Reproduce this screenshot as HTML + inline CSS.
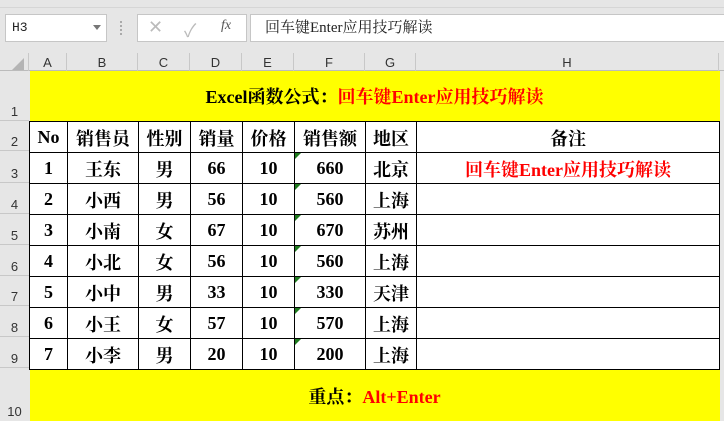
<!DOCTYPE html>
<html><head><meta charset="utf-8"><style>
*{margin:0;padding:0;box-sizing:border-box}
body{width:724px;height:420px;overflow:hidden;background:#e6e6e6;position:relative;font-family:"Liberation Sans","Noto Sans CJK SC",sans-serif}
.abs{position:absolute}
.colh{position:absolute;top:53px;height:18px;font-size:13px;color:#333;text-align:center;line-height:20px;border-right:1px solid #c8c8c8}
.rowh{position:absolute;left:0;width:29px;font-size:13px;color:#333;text-align:center;border-bottom:1px solid #c8c8c8;display:flex;align-items:flex-end;justify-content:center;line-height:16px}
table{position:absolute;left:29px;top:71px;border-collapse:collapse;table-layout:fixed;font-family:"Liberation Serif","Noto Serif CJK SC",serif;font-weight:bold;font-size:18px;color:#000}
td{text-align:center;padding:2px 0 0 0;overflow:hidden;white-space:nowrap;position:relative;background:#fff}
tr.d td{border:1.5px solid #000;height:31px}
td.y{background:#ff0;border:none}
.r{color:#f00}
.tri{position:absolute;left:0;top:0;width:0;height:0;border-top:6px solid #1e7a1e;border-right:6px solid transparent}
</style></head><body>
<div class="abs" style="left:0;top:0;width:724px;height:8px;background:#e6e6e6;border-bottom:1px solid #d6d6d6"></div>
<div class="abs" style="left:5px;top:14px;width:102px;height:28px;background:#fff;border:1px solid #c6c6c6;font-size:13px;line-height:26px;padding-left:6px;color:#222;font-family:'Liberation Mono',monospace">H3</div>
<div class="abs" style="left:93px;top:25px;width:0;height:0;border-left:4px solid transparent;border-right:4px solid transparent;border-top:5px solid #777"></div>
<div class="abs" style="left:120px;top:21px;width:2px;height:14px;border-left:2px dotted #aaa"></div>
<div class="abs" style="left:137px;top:14px;width:110px;height:28px;background:#fff;border:1px solid #c6c6c6"></div>
<div class="abs" style="left:148px;top:17px;font-size:18px;color:#bbb">✕</div>
<div class="abs" style="left:184px;top:17px;font-size:18px;color:#bbb">✓</div>
<div class="abs" style="left:221px;top:18px;font-size:14px;color:#555;font-style:italic;font-family:'Liberation Serif',serif">fx</div>
<div class="abs" style="left:250px;top:14px;width:474px;height:28px;background:#fff;border:1px solid #c6c6c6;border-right:none;font-size:15px;line-height:26px;padding-left:14px;color:#222;font-family:'Liberation Serif','Noto Serif CJK SC',serif">回车键Enter应用技巧解读</div>
<div class="abs" style="left:0;top:52px;width:724px;height:19px;background:#e6e6e6;border-bottom:1px solid #bbb"></div>
<div class="abs" style="left:0;top:53px;width:29px;height:18px;border-right:1px solid #c8c8c8"></div>
<div class="abs" style="left:12px;top:58px;width:0;height:0;border-left:12px solid transparent;border-bottom:12px solid #b4b4b4"></div>
<div class="colh" style="left:29px;width:38px">A</div>
<div class="colh" style="left:67px;width:71px">B</div>
<div class="colh" style="left:138px;width:52px">C</div>
<div class="colh" style="left:190px;width:52px">D</div>
<div class="colh" style="left:242px;width:52px">E</div>
<div class="colh" style="left:294px;width:71px">F</div>
<div class="colh" style="left:365px;width:51px">G</div>
<div class="colh" style="left:416px;width:303px">H</div>
<div class="rowh" style="top:71px;height:50px">1</div>
<div class="rowh" style="top:121px;height:30px">2</div>
<div class="rowh" style="top:151px;height:32px">3</div>
<div class="rowh" style="top:183px;height:31px">4</div>
<div class="rowh" style="top:214px;height:31px">5</div>
<div class="rowh" style="top:245px;height:31px">6</div>
<div class="rowh" style="top:276px;height:30px">7</div>
<div class="rowh" style="top:306px;height:31px">8</div>
<div class="rowh" style="top:337px;height:31px">9</div>
<div class="rowh" style="top:368px;height:52px;border-bottom:none">10</div>
<table>
<colgroup><col style="width:38px"><col style="width:71px"><col style="width:52px"><col style="width:52px"><col style="width:52px"><col style="width:71px"><col style="width:51px"><col style="width:303px"></colgroup>
<tr><td class="y" colspan="8" style="height:50px;padding-top:0">Excel函数公式：<span class="r">回车键Enter应用技巧解读</span></td></tr>
<tr class="d"><td style="height:30px">No</td><td>销售员</td><td>性别</td><td>销量</td><td>价格</td><td>销售额</td><td>地区</td><td>备注</td></tr>
<tr class="d"><td>1</td><td>王东</td><td>男</td><td>66</td><td>10</td><td><div class="tri"></div>660</td><td>北京</td><td class="r">回车键Enter应用技巧解读</td></tr>
<tr class="d"><td>2</td><td>小西</td><td>男</td><td>56</td><td>10</td><td><div class="tri"></div>560</td><td>上海</td><td></td></tr>
<tr class="d"><td>3</td><td>小南</td><td>女</td><td>67</td><td>10</td><td><div class="tri"></div>670</td><td>苏州</td><td></td></tr>
<tr class="d"><td>4</td><td>小北</td><td>女</td><td>56</td><td>10</td><td><div class="tri"></div>560</td><td>上海</td><td></td></tr>
<tr class="d"><td style="height:30px">5</td><td>小中</td><td>男</td><td>33</td><td>10</td><td><div class="tri"></div>330</td><td>天津</td><td></td></tr>
<tr class="d"><td>6</td><td>小王</td><td>女</td><td>57</td><td>10</td><td><div class="tri"></div>570</td><td>上海</td><td></td></tr>
<tr class="d"><td>7</td><td>小李</td><td>男</td><td>20</td><td>10</td><td><div class="tri"></div>200</td><td>上海</td><td></td></tr>
<tr><td class="y" colspan="8" style="height:52px;padding-top:2px">重点：<span class="r">Alt+Enter</span></td></tr>
</table>
</body></html>
